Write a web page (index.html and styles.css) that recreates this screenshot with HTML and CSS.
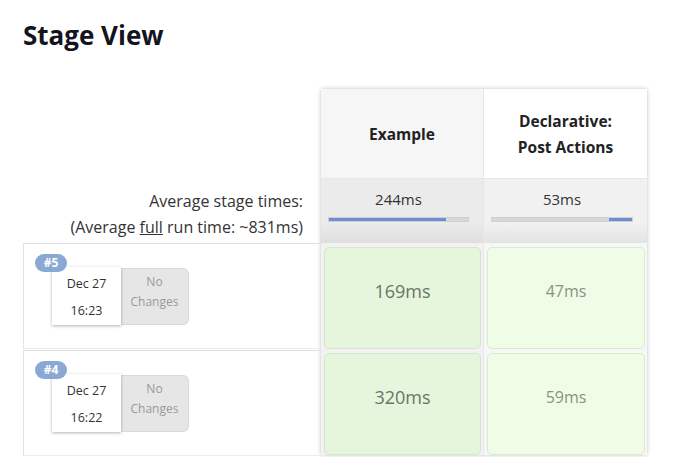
FILE: index.html
```html
<!DOCTYPE html>
<html>
<head>
<meta charset="utf-8">
<link rel="stylesheet" href="styles.css">
</head>
<body>
<div class="page">
  <h1 class="title">Stage View</h1>
  <div class="stage-view">
    <div class="labels">
      <div class="labels-head"></div>
      <div class="labels-avg">
        <div>Average stage times:</div>
        <div>(Average <u>full</u> run time: ~831ms)</div>
      </div>
      <div class="build">
        <span class="badge">#5</span>
        <div class="build-card">
          <div class="date">
            <div>Dec 27</div>
            <div>16:23</div>
          </div>
          <div class="changes">No<br>Changes</div>
        </div>
      </div>
      <div class="build">
        <span class="badge">#4</span>
        <div class="build-card">
          <div class="date">
            <div>Dec 27</div>
            <div>16:22</div>
          </div>
          <div class="changes">No<br>Changes</div>
        </div>
      </div>
    </div>
    <div class="stages">
      <div class="stage-col odd">
        <div class="stage-head">Example</div>
        <div class="stage-avg">
          <div class="avg-time">244ms</div>
          <div class="bar"><div class="fill" style="margin-left:0;width:117px"></div></div>
        </div>
        <div class="cell-wrap"><div class="cell big">169ms</div></div>
        <div class="cell-wrap"><div class="cell big">320ms</div></div>
      </div>
      <div class="stage-col even">
        <div class="stage-head">Declarative:<br>Post Actions</div>
        <div class="stage-avg">
          <div class="avg-time">53ms</div>
          <div class="bar"><div class="fill" style="margin-left:117px;width:26px"></div></div>
        </div>
        <div class="cell-wrap"><div class="cell small">47ms</div></div>
        <div class="cell-wrap"><div class="cell small">59ms</div></div>
      </div>
    </div>
  </div>
</div>
</body>
</html>
```

FILE: styles.css
```css
* { box-sizing: border-box; }
html, body { margin: 0; padding: 0; background: #fff; }
body {
  font-family: "Open Sans", "Noto Sans", sans-serif;
  color: #333;
}
.page {
  padding: 18px 0 0 23px;
}
.title {
  margin: 0;
  font-size: 26px;
  line-height: 34px;
  font-weight: 700;
  color: #14141f;
}
.stage-view {
  display: flex;
  margin-top: 37px;
}
.labels {
  width: 298px;
  display: flex;
  flex-direction: column;
}
.labels-head { height: 90px; }
.labels-avg {
  height: 64px;
  text-align: right;
  padding: 9px 18px 0 0;
  font-size: 16px;
  line-height: 26px;
  color: #333;
}
.build {
  position: relative;
  height: 106px;
  border-top: 1px solid #dedede;
  border-left: 1px solid #e3e3e3;
  border-bottom: 1px solid #ececec;
  margin-bottom: 1px;
}
.badge {
  position: absolute;
  left: 11px;
  top: 10px;
  width: 32px;
  height: 18px;
  border-radius: 9px;
  background: #89a8d3;
  color: #fff;
  font-size: 12px;
  font-weight: 700;
  line-height: 18px;
  text-align: center;
  z-index: 2;
}
.build-card {
  display: flex;
  margin: 23px 0 0 28px;
}
.date {
  width: 69px;
  height: 58px;
  background: #fff;
  box-shadow: 0 1px 3px rgba(0,0,0,0.3);
  font-size: 12.5px;
  line-height: 27px;
  text-align: center;
  padding-top: 3px;
  color: #333;
  position: relative;
  z-index: 1;
}
.changes {
  width: 68px;
  height: 57px;
  margin-top: 1px;
  background: #e6e6e6;
  border: 1px solid #dadada;
  border-left: none;
  border-radius: 0 6px 6px 0;
  color: #9a9a9a;
  font-size: 12px;
  line-height: 20px;
  text-align: center;
  padding-top: 3px;
}
.stages {
  display: flex;
  box-shadow: 0 0 4px rgba(0,0,0,0.25);
  align-self: flex-start;
}
.stage-col {
  width: 163px;
  display: flex;
  flex-direction: column;
}
.stage-col.odd { background: #f2f2f2; border-right: 1px solid #e8e8e8; }
.stage-col.even { background: #f7f7f7; }
.stage-head {
  height: 90px;
  display: flex;
  align-items: center;
  justify-content: center;
  text-align: center;
  font-weight: 700;
  font-size: 15.5px;
  line-height: 26px;
  color: #222;
  border-bottom: 1px solid #e6e6e6;
}
.odd .stage-head { background: #f6f6f6; }
.even .stage-head { background: #fff; }
.stage-avg {
  height: 64px;
  padding: 9px 14px 0 7px;
  text-align: center;
}
.odd .stage-avg { background: linear-gradient(to bottom, #ebebeb 70%, #dedede 100%); }
.even .stage-avg { background: linear-gradient(to bottom, #f1f1f1 70%, #e3e3e3 100%); }
.avg-time {
  font-size: 15px;
  line-height: 22px;
  color: #333;
}
.bar {
  display: flex;
  margin-top: 7px;
  height: 5px;
  background: #d8d8d8;
  border: 1px solid #cfcfcf;
}
.fill {
  height: 100%;
  background: #6b8fd0;
}
.cell-wrap {
  height: 106px;
  padding: 4px 2px 0 3px;
}
.cell {
  height: 102px;
  border-radius: 5px;
  display: flex;
  align-items: center;
  justify-content: center;
  padding-bottom: 14px;
}
.odd .cell {
  background: #e6f6dd;
  border: 1px solid #d5e6cc;
}
.even .cell {
  background: #effde7;
  border: 1px solid #dbe9d3;
}
.cell.big { font-size: 18px; color: #6a7566; }
.cell.small { font-size: 16px; color: #879383; }
```
